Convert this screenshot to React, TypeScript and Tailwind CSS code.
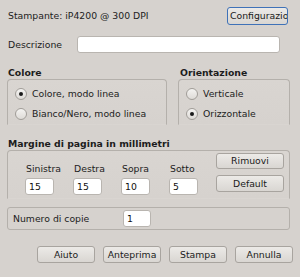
import React from 'react'

function Radio({ checked, label }: { checked?: boolean; label: string }) {
  return (
    <div className="flex items-center h-[20px]">
      <span className="w-[12px] h-[12px] rounded-full border border-[#a19d98] bg-gradient-to-b from-[#f4f3f1] to-[#dedbd7] flex items-center justify-center">
        {checked && <span className="w-[4px] h-[4px] rounded-full bg-[#1a1a1a]" />}
      </span>
      <span className="ml-[5px]">{label}</span>
    </div>
  )
}

function Btn({ children, className = '' }: { children: React.ReactNode; className?: string }) {
  return (
    <div
      className={`flex items-center justify-center rounded-[3px] border border-[#a8a49f] bg-gradient-to-b from-[#eceae7] to-[#d9d6d2] text-[#202020] ${className}`}
    >
      {children}
    </div>
  )
}

function Field({ value, className = '' }: { value?: string; className?: string }) {
  return (
    <div
      className={`flex items-center pl-[3px] rounded-[3px] border border-[#b9b5b0] bg-white text-[#111] ${className}`}
    >
      {value}
    </div>
  )
}

export default function App() {
  return (
    <div className="w-[300px] h-[277px] bg-[#d6d2ce] text-[#1c1c1c] text-[9.3px] leading-none font-['DejaVu_Sans',sans-serif] overflow-hidden">
      {/* printer row */}
      <div className="flex items-center justify-between pl-[8px] pr-[12px] pt-[7px] h-[25px]">
        <span>Stampante: iP4200 @ 300 DPI</span>
        <Btn className="w-[61px] h-[18px] !justify-start pl-[2px] !border-[#3f72b8] overflow-hidden whitespace-nowrap">Configurazio</Btn>
      </div>

      {/* description */}
      <div className="flex items-center pl-[8px] mt-[11px] h-[17px]">
        <span className="w-[69px]">Descrizione</span>
        <Field className="w-[203px] h-[17px]" />
      </div>

      {/* colour / orientation */}
      <div className="flex pl-[7px] mt-[15px]">
        <div className="w-[160px]">
          <div className="font-bold pl-[1px] h-[11px]">Colore</div>
          <div className="h-[46px] border border-[#b4b0ab] border-b-transparent rounded-t-[4px] bg-gradient-to-b from-[#d9d5d1] to-[#d6d2ce] pl-[7px] pt-[4px]">
            <Radio checked label="Colore, modo linea" />
            <Radio label="Bianco/Nero, modo linea" />
          </div>
        </div>
        <div className="w-[112px] ml-[11px]">
          <div className="font-bold pl-[2px] h-[11px]">Orientazione</div>
          <div className="h-[46px] border border-[#b4b0ab] border-b-transparent rounded-t-[4px] bg-gradient-to-b from-[#d9d5d1] to-[#d6d2ce] pl-[7px] pt-[4px]">
            <Radio label="Verticale" />
            <Radio checked label="Orizzontale" />
          </div>
        </div>
      </div>

      {/* margins */}
      <div className="pl-[7px] mt-[14px]">
        <div className="font-bold pl-[1px] h-[11px]">Margine di pagina in millimetri</div>
        <div className="w-[283px] h-[49px] border border-[#b4b0ab] border-b-transparent rounded-t-[4px] bg-gradient-to-b from-[#d9d5d1] to-[#d6d2ce] flex pt-[2px]">
          <div className="flex pl-[17px] pt-[11px]">
            {[
              ['Sinistra', '15'],
              ['Destra', '15'],
              ['Sopra', '10'],
              ['Sotto', '5'],
            ].map(([l, v]) => (
              <div key={l} className="w-[48px]">
                <div className="pl-[1px] h-[10px]">{l}</div>
                <Field value={v} className="w-[29px] h-[17px] mt-[4px]" />
              </div>
            ))}
          </div>
          <div className="flex flex-col gap-[6px] ml-[-1px]">
            <Btn className="w-[68px] h-[16px]">Rimuovi</Btn>
            <Btn className="w-[68px] h-[17px]">Default</Btn>
          </div>
        </div>
      </div>

      {/* copies */}
      <div className="pl-[7px] mt-[8px]">
        <div className="w-[283px] h-[23px] border border-[#b4b0ab] rounded-[3px] flex items-center pl-[5px]">
          <span className="w-[110px]">Numero di copie</span>
          <Field value="1" className="w-[28px] h-[17px]" />
        </div>
      </div>

      {/* actions */}
      <div className="flex gap-[8px] pl-[37px] mt-[16px]">
        <Btn className="w-[58px] h-[17px]">Aiuto</Btn>
        <Btn className="w-[58px] h-[17px]">Anteprima</Btn>
        <Btn className="w-[58px] h-[17px]">Stampa</Btn>
        <Btn className="w-[58px] h-[17px]">Annulla</Btn>
      </div>
    </div>
  )
}
